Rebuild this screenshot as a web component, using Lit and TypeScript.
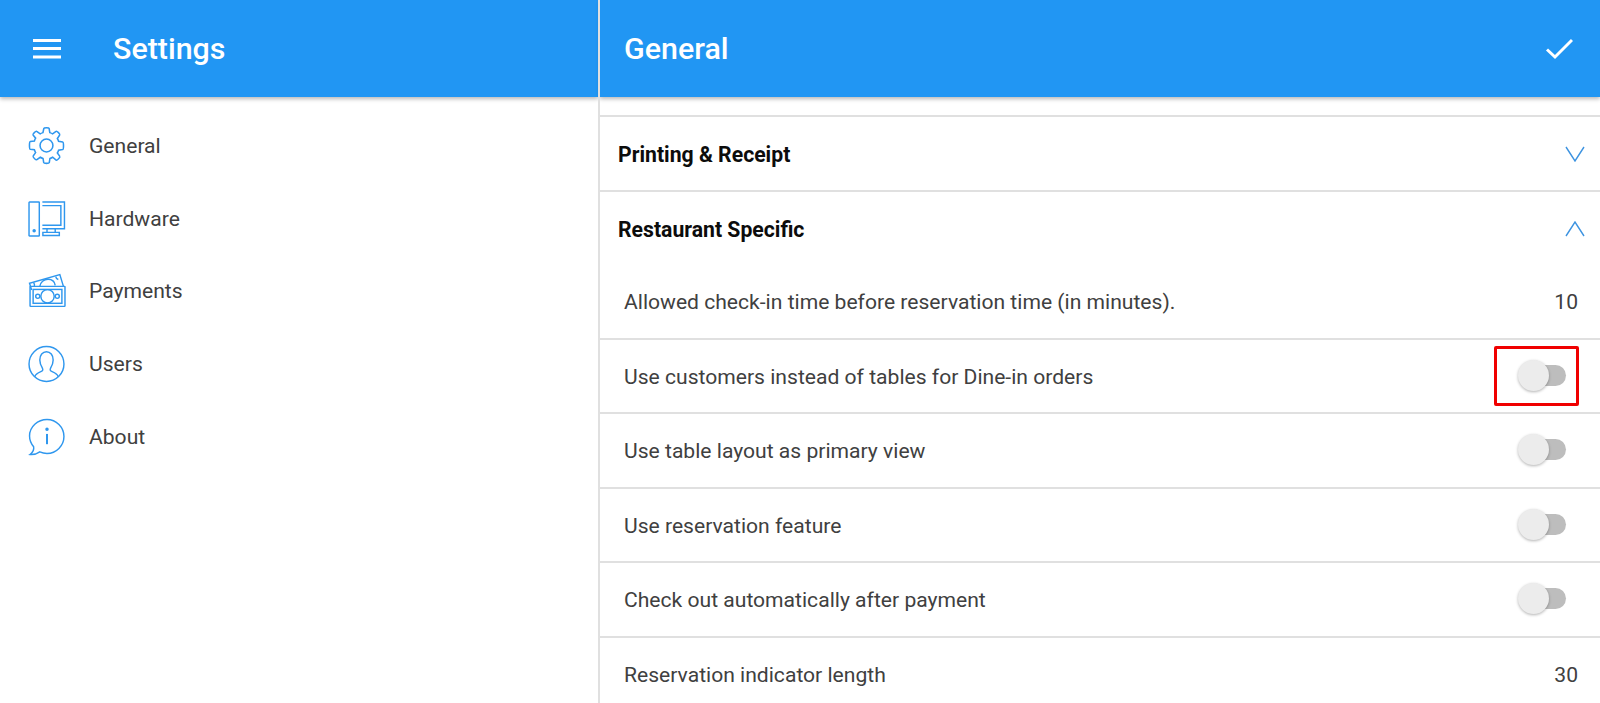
import { LitElement, html, css, svg } from "lit";
import { customElement } from "lit/decorators.js";

const icons: Record<string, unknown> = {
  gear: svg`<g transform="translate(18 17.500) scale(1.080) translate(-18 -17.500)"><path d="M15.600 2.200c.2-1 4.600-1 4.800 0l.6 3.700c.9.300 1.700.6 2.500 1.100l3.100-2.200c.8-.6 3.900 2.500 3.300 3.300L27.800 11.200c.5.800.8 1.600 1.100 2.500l3.700.6c1 .2 1 6.600 0 6.800l-3.700.6c-.3.9-.6 1.700-1.100 2.500l2.200 3.100c.6.8-2.500 3.900-3.300 3.300L23.600 28.100c-.8.5-1.600.8-2.500 1.100l-.6 3.700c-.2 1-4.800 1-5 0l-.6-3.700c-.9-.3-1.700-.6-2.500-1.100l-3.100 2.200c-.8.6-3.900-2.500-3.300-3.300l2.200-3.100c-.5-.8-.8-1.600-1.100-2.500l-3.700-.6c-1-.2-1-6.600 0-6.800l3.700-.6c.3-.9.6-1.700 1.100-2.500L5.900 8.100c-.6-.8 2.500-3.900 3.300-3.300L12.300 7c.8-.5 1.600-.8 2.500-1.100z"/><circle cx="18" cy="17.500" r="5.800"/></g>`,
  pc: svg`<rect x="1" y="1.500" width="10" height="33" rx=".5"/><circle cx="6" cy="29.500" r="1" fill="currentColor"/><path d="M14 1.500h21.500v26H14"/><path d="M14 5h18v19H14"/><path d="M18.500 27.500v3.500h8v-3.500M14.500 34h16v-3h-16z"/>`,
  cash: svg`<path d="M3.500 16 1.500 9.500 31 1l3.500 11.500"/><path d="M5.500 9c.8 1 1 2.200.7 3.500M27 3c.2 1.300 1 2.300 2.500 2.800M11.500 12.500c.5-4 4-7 8-7s6.500 2.500 7 6"/><rect x="2" y="12.500" width="34" height="19.500" rx=".5"/><rect x="5" y="15.500" width="28" height="13.500"/><circle cx="19" cy="22.200" r="6.500"/><circle cx="9.500" cy="22.200" r="2"/><circle cx="28.500" cy="22.200" r="2"/>`,
  user: svg`<circle cx="18" cy="18" r="17"/><path d="M6.500 30.500c1-3 3-3.800 6-5 2-.8 2.300-2 1.500-3.500-1.500-2.500-2.500-5-2.500-8 0-4.500 2.700-8 6.500-8s6.500 3.500 6.500 8c0 3-1 5.500-2.500 8-.8 1.500-.5 2.700 1.500 3.500 3 1.200 5 2 6 5"/>`,
  info: svg`<path d="M18.500 1C9.500 1 1.500 8 1.500 17c0 4 1.500 7.500 4 10.500.5 3-.8 5.500-3.500 7.500 3.500.3 7-.8 9.500-2.500 2.200 1 4.500 1.500 7 1.500 9 0 16.500-7.500 16.500-16.500S27.500 1 18.500 1z"/><circle cx="18.500" cy="10.500" r="1" fill="currentColor"/><path d="M18.500 15v10" stroke-width="2"/>`,
};

const nav = [
  ["gear", "General"],
  ["pc", "Hardware"],
  ["cash", "Payments"],
  ["user", "Users"],
  ["info", "About"],
];

const rows: [string, string | null, boolean?][] = [
  ["Allowed check-in time before reservation time (in minutes).", "10"],
  ["Use customers instead of tables for Dine-in orders", null, true],
  ["Use table layout as primary view", null],
  ["Use reservation feature", null],
  ["Check out automatically after payment", null],
  ["Reservation indicator length", "30"],
];

@customElement("app-root")
export class AppRoot extends LitElement {
  static styles = css`
    :host {
      display: block;
      width: 1600px;
      height: 703px;
      overflow: hidden;
      background: #fff;
      font-family: Roboto, "Liberation Sans", sans-serif;
      color: #404040;
    }
    .app { display: flex; height: 703px; }
    .left { width: 598px; flex: none; }
    .divider { width: 2px; flex: none; background: #e0e0e0; position: relative; z-index: 2; }
    .right { flex: 1; min-width: 0; }
    .bar {
      height: 97px;
      background: #2196f3;
      color: #fff;
      display: flex;
      align-items: center;
      box-shadow: 0 2px 4px rgba(0, 0, 0, 0.28);
      position: relative;
      font-size: 30.400px;
      font-weight: 500;
    }
    .left .bar { padding-left: 33px; gap: 22px; }
    .right .bar { padding: 0 27px 0 24px; justify-content: space-between; }
    .burger { width: 28px; height: 20px; display: block; fill: #fff; margin-right: 30px; }
    .check { width: 28px; height: 22px; display: block; fill: none; stroke: #fff; stroke-width: 3; }
    nav { padding-top: 13px; display: flex; flex-direction: column; }
    .item { height: 72.700px; display: flex; align-items: center; padding-left: 28px; font-size: 21.100px; }
    .item span { padding-bottom: 2px; }
    .item svg {
      width: 38px;
      height: 38px;
      margin-right: 23px;
      fill: none;
      stroke: #2f97ee;
      stroke-width: 1.400;
      color: #2f97ee;
      flex: none;
      overflow: visible;
    }
    .content { padding-top: 18px; }
    .head {
      height: 73px;
      border-top: 2px solid #e0e0e0;
      display: flex;
      align-items: center;
      justify-content: space-between;
      padding: 0 15px 0 18px;
      font-size: 21.200px;
      font-weight: 700;
      color: #0c0c0c;
    }
    .head span { padding-top: 1px; }
    .chev { width: 20px; height: 16px; fill: none; stroke: #3d93e0; stroke-width: 1.400; display: block; }
    .row {
      height: 72.500px;
      border-bottom: 2px solid #e0e0e0;
      display: flex;
      align-items: center;
      justify-content: space-between;
      padding: 0 22px 0 24px;
      font-size: 21.100px;
    }
    .row span { padding-top: 1px; }
    .toggle { position: relative; width: 48px; height: 32px; flex: none; margin-right: 12px; }
    .toggle::before {
      content: "";
      position: absolute;
      left: 14px;
      top: 5px;
      width: 34px;
      height: 21px;
      border-radius: 11px;
      background: #bdbdbd;
    }
    .toggle::after {
      content: "";
      position: absolute;
      left: 0;
      top: 0;
      width: 31px;
      height: 31px;
      border-radius: 50%;
      background: #ececec;
      box-shadow: 0 1px 3px rgba(0, 0, 0, 0.3);
    }
    .mark { position: absolute; inset: -14px -13px -14px -24px; border: 3px solid #f00000; border-radius: 2px; }
  `;

  render() {
    return html`<div class="app">
      <div class="left">
        <div class="bar">
          <svg class="burger" viewBox="0 0 28 20"><rect y="0" width="28" height="3"/><rect y="8" width="28" height="3"/><rect y="16.500" width="28" height="3"/></svg>
          <span>Settings</span>
        </div>
        <nav>
          ${nav.map(([i, t]) => html`<div class="item"><svg viewBox="0 0 37 36">${icons[i]}</svg><span>${t}</span></div>`)}
        </nav>
      </div>
      <div class="divider"></div>
      <div class="right">
        <div class="bar">
          <span>General</span>
          <svg class="check" viewBox="0 0 28 22"><path d="M2 11.500l8 7.500L27 2"/></svg>
        </div>
        <div class="content">
          <div class="head"><span>Printing &amp; Receipt</span><svg class="chev" viewBox="0 0 20 16"><path d="M1 1l9 14 9-14"/></svg></div>
          <div class="head"><span>Restaurant Specific</span><svg class="chev" viewBox="0 0 20 16"><path d="M1 15l9-14 9 14"/></svg></div>
          ${rows.map(([t, v, m]) => html`<div class="row"><span>${t}</span>${v ? html`<span>${v}</span>` : html`<div class="toggle">${m ? html`<div class="mark"></div>` : ""}</div>`}</div>`)}
        </div>
      </div>
    </div>`;
  }
}
